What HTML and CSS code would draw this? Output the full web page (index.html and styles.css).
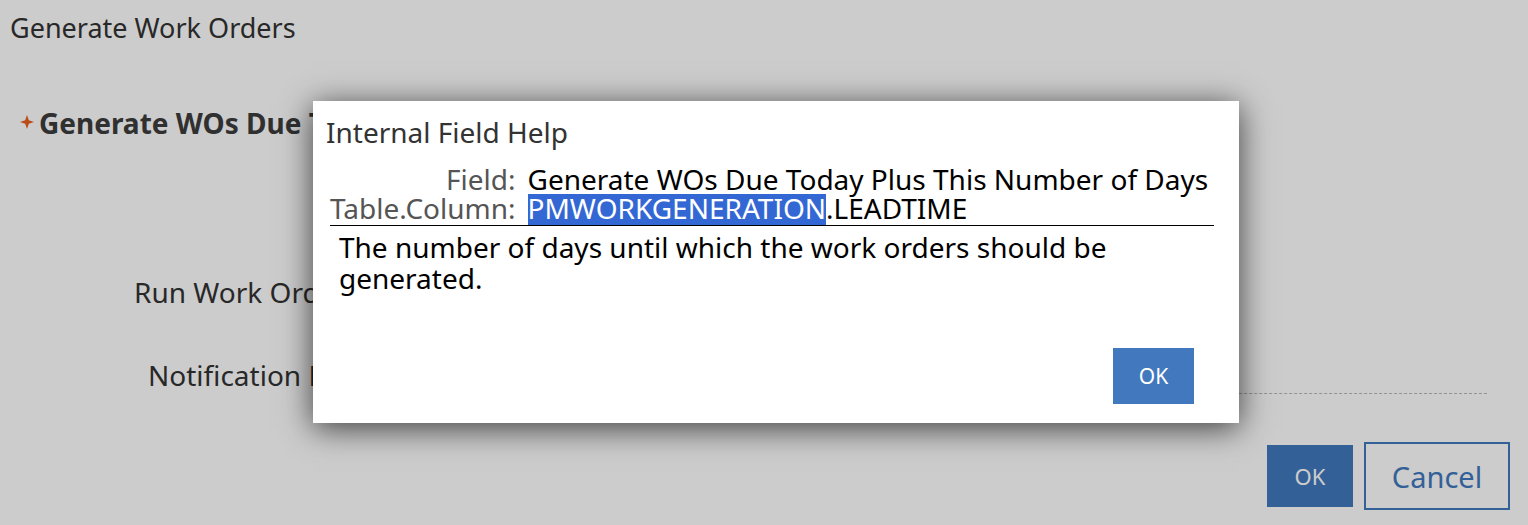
FILE: index.html
```html
<!DOCTYPE html>
<html>
<head>
<meta charset="utf-8">
<link rel="stylesheet" href="styles.css">
</head>
<body>
<div class="page">
  <div class="page-title">Generate Work Orders</div>
  <div class="section-label"><svg class="req" viewBox="0 0 14 14" width="14" height="14"><path d="M7 0 L8.8 5.2 L14 7 L8.8 8.8 L7 14 L5.2 8.8 L0 7 L5.2 5.2 Z"/></svg>Generate WOs Due Today Plus This Number of Days</div>
  <div class="row row-run"><span class="label">Run Work Orders Now?</span></div>
  <div class="row row-notify"><span class="label">Notification Email</span><span class="field"></span></div>
  <div class="actions">
    <button class="btn btn-primary">OK</button>
    <button class="btn btn-secondary">Cancel</button>
  </div>
</div>
<div class="overlay"></div>
<div class="dialog">
  <div class="dialog-title">Internal Field Help</div>
  <div class="meta">
    <span class="meta-key">Field:</span><span class="meta-val">Generate WOs Due Today Plus This Number of Days</span>
    <span class="meta-key">Table.Column:</span><span class="meta-val"><span class="sel">PMWORKGENERATION</span>.LEADTIME</span>
  </div>
  <div class="desc">The number of days until which the work orders should be generated.</div>
  <div class="dialog-actions">
    <button class="dbtn">OK</button>
  </div>
</div>
</body>
</html>
```
FILE: styles.css
```css
html, body {
  margin: 0;
  padding: 0;
}
body {
  width: 1528px;
  height: 525px;
  overflow: hidden;
  background: #ffffff;
  font-family: "Noto Sans", "Open Sans", sans-serif;
  color: #333333;
  position: relative;
}
.page {
  padding: 10px 18px 0 10px;
  display: flex;
  flex-direction: column;
}
.page-title {
  font-size: 27px;
  line-height: 36px;
  color: #333;
}
.section-label {
  margin-top: 59px;
  padding-left: 10px;
  font-size: 28px;
  font-weight: bold;
  line-height: 36px;
  color: #3c3c3c;
  white-space: nowrap;
  display: flex;
  align-items: center;
}
.req {
  fill: #ea5f1e;
  margin-right: 5px;
  margin-top: -2px;
}
.row {
  font-size: 28px;
  line-height: 36px;
  display: flex;
  align-items: flex-end;
  white-space: nowrap;
}
.row-run {
  margin-top: 133px;
  padding-left: 124px;
}
.row-notify {
  margin-top: 47px;
  padding-left: 138px;
  margin-right: 23px;
}
.field {
  flex: 1;
  margin-left: 20px;
  border-bottom: 1px dashed #b8b8b8;
  height: 18px;
  margin-bottom: -1px;
}
.actions {
  display: flex;
  justify-content: flex-end;
  align-items: center;
  gap: 11px;
  margin-top: 49px;
}
.btn {
  font-family: inherit;
  font-size: 22px;
  cursor: pointer;
}
.btn-primary {
  width: 86px;
  height: 62px;
  background: #4178be;
  color: #ffffff;
  border: none;
}
.btn-secondary {
  width: 146px;
  height: 68px;
  background: #ffffff;
  color: #4178be;
  border: 2px solid #4178be;
  font-size: 29px;
}
.overlay {
  position: absolute;
  inset: 0;
  background: rgba(0, 0, 0, 0.2);
}
.dialog {
  position: absolute;
  left: 313px;
  top: 101px;
  width: 926px;
  height: 322px;
  box-sizing: border-box;
  background: #ffffff;
  box-shadow: 0 5px 30px rgba(0, 0, 0, 0.7);
  padding: 14px 25px 0 13px;
  display: flex;
  flex-direction: column;
}
.dialog-title {
  font-size: 28px;
  line-height: 34px;
  color: #333;
}
.meta {
  margin-top: 16px;
  display: grid;
  grid-template-columns: auto 1fr;
  column-gap: 12px;
  font-size: 28px;
  line-height: 29px;
  border-bottom: 1px solid #000;
  padding-bottom: 2px;
  margin-left: 4px;
}
.meta-key {
  text-align: right;
  color: #555;
}
.meta-val {
  color: #000;
  white-space: nowrap;
}
.sel {
  display: inline-block;
  line-height: 29px;
  background: #3368d4;
  box-shadow: 0 2px 0 #3368d4;
  color: #fff;
}
.desc {
  font-size: 28px;
  line-height: 31px;
  color: #000;
  padding: 6px 0 0 13px;
}
.dialog-actions {
  margin-top: auto;
  display: flex;
  justify-content: flex-end;
  padding-bottom: 19px;
  padding-right: 20px;
}
.dbtn {
  width: 81px;
  height: 56px;
  background: #4178be;
  color: #fff;
  border: none;
  font-family: "Noto Sans", sans-serif;
  font-size: 21px;
}
```
